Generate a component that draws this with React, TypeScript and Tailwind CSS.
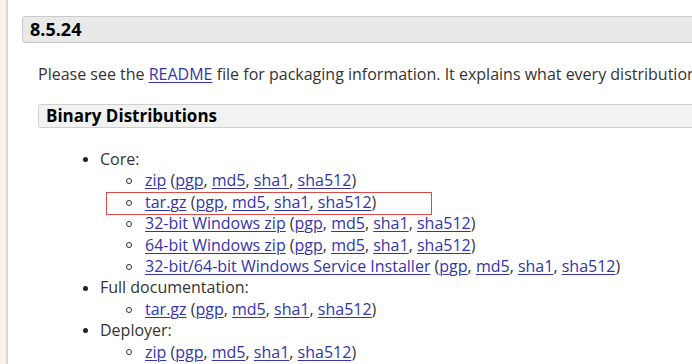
const core = [
  "zip",
  "tar.gz",
  "32-bit Windows zip",
  "64-bit Windows zip",
  "32-bit/64-bit Windows Service Installer",
];

const groups: { title: string; items: string[] }[] = [
  { title: "Core:", items: core },
  { title: "Full documentation:", items: ["tar.gz"] },
  { title: "Deployer:", items: ["zip"] },
];

const sigs = ["pgp", "md5", "sha1", "sha512"];

function Link({ children }: { children: React.ReactNode }) {
  return <a className="text-[#3434ad] underline underline-offset-2 decoration-1">{children}</a>;
}

function SubItem({ name, marked }: { name: string; marked?: boolean }) {
  return (
    <li className="relative flex items-center">
      <span className="ml-[104px] mr-[13px] h-[6px] w-[6px] rounded-full border border-[#333]" />
      <span className="whitespace-nowrap">
        <Link>{name}</Link> (
        {sigs.map((s, i) => (
          <span key={s}>
            <Link>{s}</Link>
            {i < sigs.length - 1 ? ", " : ""}
          </span>
        ))}
        )
      </span>
      {marked && (
        <span className="absolute left-[84px] top-[0px] h-[23px] w-[326px] border border-[#e04848]" />
      )}
    </li>
  );
}

export default function App() {
  return (
    <div className="flex h-[364px] w-[692px] overflow-hidden bg-white font-['Open_Sans',sans-serif] text-[16px] text-[#333]">
      <div className="w-[6px] shrink-0 bg-[#fbf1ec]" />
      <div className="w-[2px] shrink-0 bg-[#dcd4d0]" />
      <div className="min-w-0 flex-1 pl-[14px]">
        <div className="mt-[16px] -mr-[20px] flex h-[27px] items-center rounded-[3px] border border-[#cacaca] bg-[#e9e9e9] pl-[7px] text-[18px] font-bold text-black">
          8.5.24
        </div>
        <p className="mt-[20px] pl-[16px] leading-[22px] whitespace-nowrap">
          Please see the <Link>README</Link> file for packaging information. It explains what every distribution contains.
        </p>
        <div className="mt-[19px] ml-[16px] -mr-[20px] flex h-[24px] items-center rounded-[3px] border border-[#cfcfcf] bg-[#f2f2f2] pl-[7px] text-[17px] font-bold text-black">
          Binary Distributions
        </div>
        <ul className="mt-[21px] leading-[21.4px]">
          {groups.map((g) => (
            <li key={g.title}>
              <div className="flex items-center">
                <span className="ml-[61px] mr-[12px] h-[5px] w-[5px] rounded-full bg-[#222]" />
                <span>{g.title}</span>
              </div>
              <ul>
                {g.items.map((it, i) => (
                  <SubItem key={it} name={it} marked={g.title === "Core:" && i === 1} />
                ))}
              </ul>
            </li>
          ))}
        </ul>
      </div>
    </div>
  );
}
